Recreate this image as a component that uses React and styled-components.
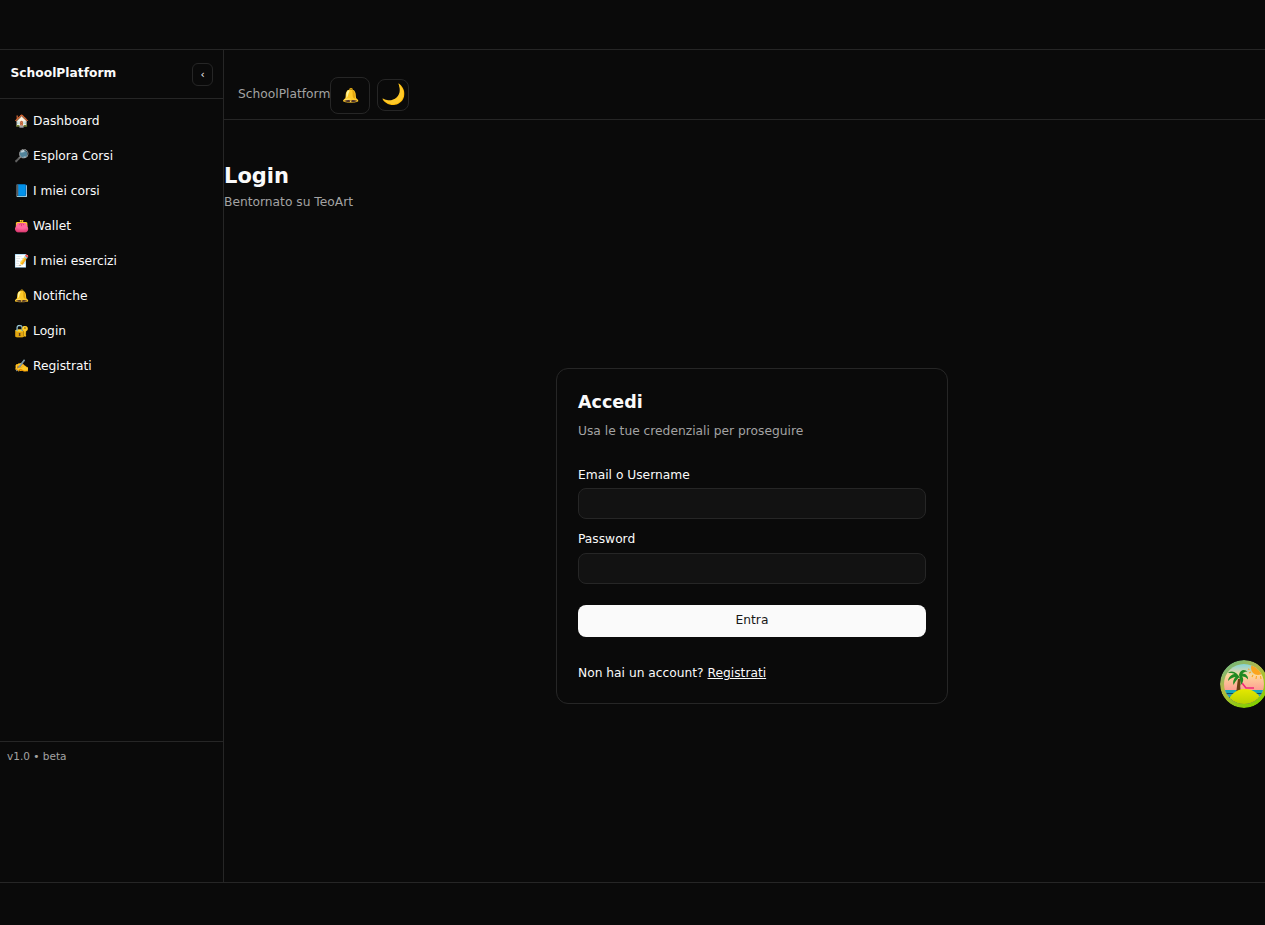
import React from 'react';
import styled, { createGlobalStyle } from 'styled-components';

const GlobalStyle = createGlobalStyle`
  * { box-sizing: border-box; }
  html, body { margin: 0; padding: 0; background: #0a0a0a; }
  body {
    color: #fafafa;
    font-family: "DejaVu Sans", "Noto Color Emoji", sans-serif;
    font-size: 12.25px;
  }
`;

const Page = styled.div`
  height: 925px;
  display: flex;
  flex-direction: column;
  overflow: hidden;
`;

const TopStrip = styled.div`
  height: 50px;
  flex: none;
  border-bottom: 1px solid #262626;
`;

const Shell = styled.div`
  height: 832px;
  flex: none;
  display: flex;
`;

const BottomStrip = styled.div`
  flex: 1;
  border-top: 1px solid #262626;
`;

const Sidebar = styled.aside`
  width: 224px;
  flex: none;
  display: flex;
  flex-direction: column;
  border-right: 1px solid #262626;
`;

const SideHeader = styled.div`
  height: 49px;
  flex: none;
  display: flex;
  align-items: center;
  justify-content: space-between;
  padding: 0 10px 2px 10.5px;
  border-bottom: 1px solid #262626;
`;

const Brand = styled.div`
  font-size: 12.25px;
  font-weight: 700;
  line-height: 16px;
  margin-top: -1px;
`;

const CollapseButton = styled.button`
  width: 21px;
  height: 23px;
  padding: 0;
  margin-top: 2px;
  border: 1px solid #262626;
  border-radius: 6px;
  background: transparent;
  color: #fafafa;
  font: 10.5px "DejaVu Sans", sans-serif;
`;

const Nav = styled.nav`
  flex: 1;
  display: flex;
  flex-direction: column;
  padding-top: 4px;
`;

const NavItem = styled.a`
  height: 35px;
  display: flex;
  align-items: center;
  gap: 3.25px;
  padding-left: 14.5px;
  font-size: 12.25px;
  color: #fafafa;
  text-decoration: none;
`;

const SideFooter = styled.div`
  height: 141px;
  flex: none;
  padding: 7px 7px;
  border-top: 1px solid #262626;
  color: #a3a3a3;
  font-size: 10.5px;
  line-height: 14px;
`;

const Main = styled.main`
  flex: 1;
  min-width: 0;
  display: flex;
  flex-direction: column;
`;

const Topbar = styled.header`
  height: 70px;
  flex: none;
  display: flex;
  align-items: center;
  padding: 21px 0 0 14px;
  border-bottom: 1px solid #262626;
`;

const TopTitle = styled.span`
  color: #a3a3a3;
  font-size: 12.25px;
  margin-top: -2px;
`;

const IconButton = styled.button`
  width: ${(p) => p.$width}px;
  height: ${(p) => p.$height}px;
  margin-left: ${(p) => p.$gap}px;
  padding: ${(p) => p.$pad};
  display: flex;
  align-items: center;
  justify-content: center;
  border: 1px solid #262626;
  border-radius: 8px;
  background: transparent;
  font-size: ${(p) => p.$font}px;
  font-family: "Noto Color Emoji", "DejaVu Sans", sans-serif;
`;

const PageHead = styled.div`
  flex: none;
  padding-top: 41px;
`;

const PageTitle = styled.h1`
  margin: 0;
  font-size: 21px;
  font-weight: 700;
  line-height: 30px;
`;

const PageSub = styled.p`
  margin: 2px 0 0;
  font-size: 12.25px;
  line-height: 18px;
  color: #a3a3a3;
`;

const Center = styled.div`
  flex: 1;
  display: flex;
  justify-content: center;
  padding: 157px 0 0 15px;
`;

const Card = styled.section`
  width: 392px;
  height: 336px;
  padding: 21px;
  border: 1px solid #262626;
  border-radius: 12px;
`;

const CardTitle = styled.h2`
  margin: 0;
  font-size: 17.5px;
  font-weight: 700;
  line-height: 24px;
`;

const CardSub = styled.p`
  margin: 8px 0 0;
  font-size: 12.25px;
  line-height: 18px;
  color: #a3a3a3;
`;

const Form = styled.form`
  margin-top: 26px;
  display: flex;
  flex-direction: column;
`;

const Label = styled.label`
  display: block;
  font-size: 12.25px;
  line-height: 18px;
  margin-bottom: ${(p) => (p.$first ? 4 : 5)}px;
  margin-top: ${(p) => (p.$first ? 0 : 11)}px;
`;

const Input = styled.input`
  display: block;
  width: 100%;
  height: 31px;
  border: 1px solid #262626;
  border-radius: 8px;
  background: #121212;
  color: #fafafa;
  outline: none;
`;

const Submit = styled.button`
  height: 32px;
  margin-top: 21px;
  padding: 0 0 2px;
  border: 0;
  border-radius: 8px;
  background: #fafafa;
  color: #171717;
  font: 12.25px "DejaVu Sans", sans-serif;
`;

const SignupLine = styled.p`
  margin: 27px 0 0;
  font-size: 12.25px;
  line-height: 18px;

  a {
    color: #fafafa;
    text-decoration: underline;
  }
`;

const Bubble = styled.div`
  position: fixed;
  left: 1220px;
  top: 660px;
  width: 48px;
  height: 48px;
  border-radius: 50%;
  overflow: hidden;
`;

const navItems = [
  ['🏠', 'Dashboard'],
  ['🔎', 'Esplora Corsi'],
  ['📘', 'I miei corsi'],
  ['👛', 'Wallet'],
  ['📝', 'I miei esercizi'],
  ['🔔', 'Notifiche'],
  ['🔐', 'Login'],
  ['✍️', 'Registrati'],
];

// little beach badge floating on the right edge
function BeachLogo() {
  return (
    <svg width="48" height="48" viewBox="0 0 48 48">
      <defs>
        <linearGradient id="ring" x1="0" y1="0" x2="0.6" y2="1">
          <stop offset="0" stopColor="#58b890" />
          <stop offset="0.45" stopColor="#b4b848" />
          <stop offset="1" stopColor="#84d000" />
        </linearGradient>
        <linearGradient id="sky" x1="0" y1="0" x2="0" y2="1">
          <stop offset="0.05" stopColor="#70d4e2" />
          <stop offset="0.32" stopColor="#fdd79a" />
          <stop offset="0.66" stopColor="#fc9a92" />
        </linearGradient>
        <linearGradient id="hill" x1="0" y1="0" x2="0" y2="1">
          <stop offset="0" stopColor="#e6e800" />
          <stop offset="0.45" stopColor="#b4d000" />
          <stop offset="1" stopColor="#4f9400" />
        </linearGradient>
        <clipPath id="inner">
          <circle cx="24" cy="24" r="20" />
        </clipPath>
      </defs>
      <circle cx="24" cy="24" r="24" fill="url(#ring)" />
      <g clipPath="url(#inner)">
        <rect width="48" height="48" fill="url(#sky)" />
        <circle cx="38" cy="8" r="7" fill="#fba51e" />
        <path d="M28 9l1.500 .5M29 13l2-1M32 17l1-2M36 19l.5-3M41 19l-.5-3" stroke="#fba51e" strokeWidth="1.1" />
        <rect x="0" y="30" width="48" height="3" fill="#16a8bc" />
        <rect x="0" y="33" width="48" height="1.5" fill="#0a4f66" />
        <rect x="0" y="34.500" width="48" height="2.500" fill="#16a8bc" />
        <rect x="0" y="37" width="48" height="11" fill="#0a4f66" />
        <path d="M22 23l4 5h8" fill="none" stroke="#f0287a" strokeWidth="1.6" />
        <path d="M16 33C17 28 17 24 18 19l3 0C20 24 20 29 21 33z" fill="#6a3f12" />
        <path d="M20 18C17 12 12 10 8 13c3-.3 5 0 6.500 1C11 14.500 8.500 17 8 21c3-3 5.500-4 7.500-4-2 2-3 5-2 8 1.500-3 3.500-6 5.500-7.500 1 1.500 2.500 5 1.500 8 3-3 3.500-7 1.500-9 3 0 4.500 1 6 3 .5-3-2-6-5.500-6 1.500-1.500 3.500-2 5-1.500-2-3-7.500-3-8.500 3z" fill="#1f8a22" />
        <ellipse cx="25" cy="47" rx="18" ry="18" fill="url(#hill)" />
      </g>
    </svg>
  );
}

export default function App() {
  return (
    <Page>
      <GlobalStyle />
      <TopStrip />
      <Shell>
        <Sidebar>
          <SideHeader>
            <Brand>SchoolPlatform</Brand>
            <CollapseButton>‹</CollapseButton>
          </SideHeader>
          <Nav>
            {navItems.map(([icon, label]) => (
              <NavItem key={label} href="#">
                <span>{icon}</span>
                <span>{label}</span>
              </NavItem>
            ))}
          </Nav>
          <SideFooter>v1.0 • beta</SideFooter>
        </Sidebar>
        <Main>
          <Topbar>
            <TopTitle>SchoolPlatform</TopTitle>
            <IconButton $width={40} $height={37} $gap={0} $font={14} $pad="0 0 0 2px">🔔</IconButton>
            <IconButton $width={32} $height={32} $gap={7} $font={20} $pad="0 0 2px">🌙</IconButton>
          </Topbar>
          <PageHead>
            <PageTitle>Login</PageTitle>
            <PageSub>Bentornato su TeoArt</PageSub>
          </PageHead>
          <Center>
            <Card>
              <CardTitle>Accedi</CardTitle>
              <CardSub>Usa le tue credenziali per proseguire</CardSub>
              <Form onSubmit={(e) => e.preventDefault()}>
                <Label $first>Email o Username</Label>
                <Input type="text" />
                <Label>Password</Label>
                <Input type="password" />
                <Submit>Entra</Submit>
              </Form>
              <SignupLine>
                Non hai un account? <a href="#">Registrati</a>
              </SignupLine>
            </Card>
          </Center>
        </Main>
      </Shell>
      <BottomStrip />
      <Bubble>
        <BeachLogo />
      </Bubble>
    </Page>
  );
}
